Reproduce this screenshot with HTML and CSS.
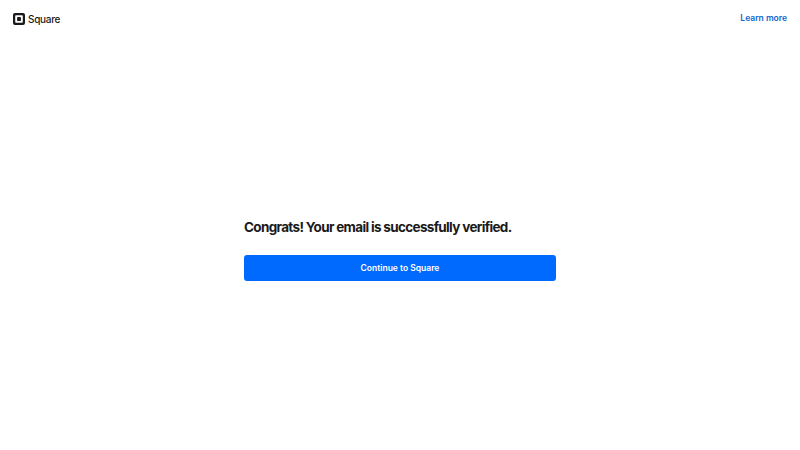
FILE: index.html
```html
<!DOCTYPE html>
<html lang="en">
<head>
<meta charset="utf-8">
<title>Square</title>
<link rel="stylesheet" href="styles.css">
</head>
<body>
<header class="topbar">
  <a class="brand" href="#">
    <svg class="logo" viewBox="0 0 12 12" width="12" height="12" aria-hidden="true">
      <path fill="#1a1a1a" fill-rule="evenodd" d="M2 0h8a2 2 0 0 1 2 2v8a2 2 0 0 1-2 2H2a2 2 0 0 1-2-2V2a2 2 0 0 1 2-2zM3 2.2a.8.8 0 0 0-.8.8v6a.8.8 0 0 0 .8.8h6a.8.8 0 0 0 .8-.8V3a.8.8 0 0 0-.8-.8z"/>
      <rect x="4.1" y="4.1" width="3.8" height="3.8" rx=".4" fill="#1a1a1a"/>
    </svg>
    <span class="brand-name">Square</span>
  </a>
  <a class="learn" href="#">Learn more</a>
</header>
<main class="content">
  <div class="panel">
    <h1 class="title">Congrats! Your email is successfully verified.</h1>
    <a class="cta" href="#">Continue to Square</a>
  </div>
</main>
</body>
</html>
```
FILE: styles.css
```css
* { box-sizing: border-box; }
html, body { margin: 0; height: 100%; }
body {
  width: 800px;
  height: 450px;
  background: #fff;
  font-family: Inter, "Liberation Sans", sans-serif;
  color: #1a1a1a;
  overflow: hidden;
  display: flex;
  flex-direction: column;
}
a { text-decoration: none; }
.topbar {
  display: flex;
  justify-content: space-between;
  align-items: center;
  height: 36px;
  padding: 0 13px;
}
.brand { display: flex; align-items: center; gap: 3px; margin-top: 1px; color: #1a1a1a; }
.logo { display: block; }
.brand-name { font-size: 10px; font-weight: 500; letter-spacing: -0.3px; }
.learn { color: #0e66d0; font-size: 8.5px; font-weight: 600; }
.content { flex: 1; display: flex; justify-content: center; padding-top: 182px; }
.panel { width: 312px; }
.title {
  margin: 0 0 18px;
  font-size: 13.5px;
  line-height: 19px;
  font-weight: 700;
  letter-spacing: -0.67px;
}
.cta {
  display: flex;
  align-items: center;
  justify-content: center;
  height: 26px;
  padding-bottom: 1px;
  border-radius: 3px;
  background: #006aff;
  color: #fff;
  font-size: 8.5px;
  font-weight: 600;
}
```
